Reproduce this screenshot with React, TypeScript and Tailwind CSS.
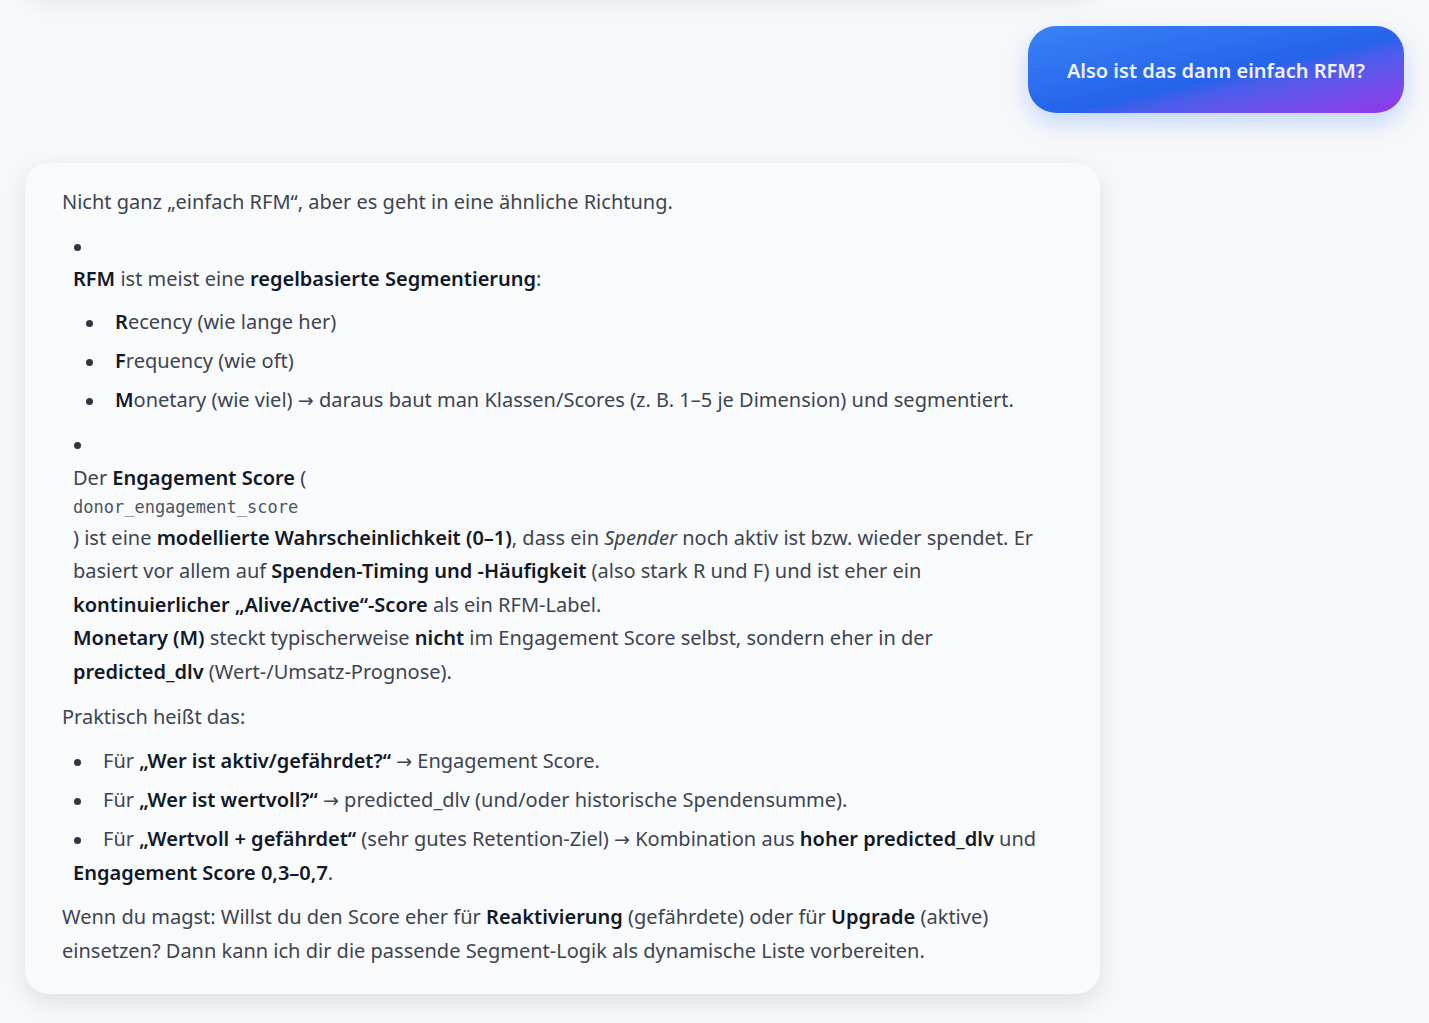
import React from "react";

const Dot = () => (
  <span className="inline-block w-[30px]">
    <span className="inline-block w-[7px] h-[7px] rounded-full bg-[#2f3542] ml-[1px] align-middle" />
  </span>
);

const B = ({ children }: { children: React.ReactNode }) => (
  <strong className="font-semibold text-[#111827]">{children}</strong>
);

const Arrow = () => (
  <span
    className="text-[19px] leading-none"
    style={{ fontFamily: '"DejaVu Sans", sans-serif' }}
  >
    →
  </span>
);

export default function App() {
  return (
    <div
      className="min-h-screen bg-[#f7f8fa] px-[25px] overflow-hidden text-[#3d4450]"
      style={{ fontFamily: '"Noto Sans", "Open Sans", sans-serif' }}
    >
      {/* previous message, scrolled off the top */}
      <div className="w-[1068px] h-[40px] -mt-[48px] rounded-3xl bg-[#f9fafb] shadow-[0_8px_24px_rgba(0,0,0,0.09)]" />

      {/* user bubble */}
      <div className="flex justify-end mt-[34px]">
        <div className="w-[376px] h-[87px] rounded-[28px] flex items-center justify-center pt-[3px] bg-linear-to-br from-[#3b82f6] via-[#2563eb] via-55% to-[#9333ea] shadow-[0_10px_24px_rgba(59,130,246,0.28)]">
          <span className="text-[20px] font-semibold text-[#eef2ff]">
            Also ist das dann einfach RFM?
          </span>
        </div>
      </div>

      {/* assistant answer */}
      <div className="mt-[50px] w-[1075px] rounded-3xl bg-[#f9fafb] shadow-[0_8px_24px_rgba(0,0,0,0.1)] pl-[37px] pr-[20px] pt-[22px] pb-[27px] text-[20px] leading-[33.5px] whitespace-nowrap">
        <p>Nicht ganz „einfach RFM“, aber es geht in eine ähnliche Richtung.</p>

        <ul className="mt-[10px] pl-[11px]">
          <li>
            <Dot />
            <p>
              <B>RFM</B> ist meist eine <B>regelbasierte Segmentierung</B>:
            </p>
            <ul className="mt-[9px] pl-[12px] flex flex-col gap-[5.5px]">
              <li>
                <Dot />
                <B>R</B>ecency (wie lange her)
              </li>
              <li>
                <Dot />
                <B>F</B>requency (wie oft)
              </li>
              <li>
                <Dot />
                <B>M</B>onetary (wie viel) <Arrow /> daraus baut man Klassen/Scores (z. B. 1–5 je Dimension) und segmentiert.
              </li>
            </ul>
          </li>
          <li className="mt-[11px]">
            <Dot />
            <p>
              Der <B>Engagement Score</B> (
            </p>
            <code
              className="block text-[17px] leading-[26.5px] text-[#4b5563]"
              style={{ fontFamily: '"DejaVu Sans Mono", "Liberation Mono", monospace' }}
            >
              donor_engagement_score
            </code>
            <p>
              ) ist eine <B>modellierte Wahrscheinlichkeit (0–1)</B>, dass ein <em>Spender</em> noch aktiv ist bzw. wieder spendet. Er
              <br />
              basiert vor allem auf <B>Spenden-Timing und -Häufigkeit</B> (also stark R und F) und ist eher ein
              <br />
              <B>kontinuierlicher „Alive/Active“-Score</B> als ein RFM-Label.
              <br />
              <B>Monetary (M)</B> steckt typischerweise <B>nicht</B> im Engagement Score selbst, sondern eher in der
              <br />
              <B>predicted_dlv</B> (Wert-/Umsatz-Prognose).
            </p>
          </li>
        </ul>

        <p className="mt-[12px]">Praktisch heißt das:</p>

        <ul className="mt-[10.5px] pl-[11px] flex flex-col gap-[5.5px]">
          <li>
            <Dot />
            Für <B>„Wer ist aktiv/gefährdet?“</B> <Arrow /> Engagement Score.
          </li>
          <li>
            <Dot />
            Für <B>„Wer ist wertvoll?“</B> <Arrow /> predicted_dlv (und/oder historische Spendensumme).
          </li>
          <li>
            <Dot />
            Für <B>„Wertvoll + gefährdet“</B> (sehr gutes Retention-Ziel) <Arrow /> Kombination aus <B>hoher predicted_dlv</B> und
            <br />
            <B>Engagement Score 0,3–0,7</B>.
          </li>
        </ul>

        <p className="mt-[11px]">
          Wenn du magst: Willst du den Score eher für <B>Reaktivierung</B> (gefährdete) oder für <B>Upgrade</B> (aktive)
          <br />
          einsetzen? Dann kann ich dir die passende Segment-Logik als dynamische Liste vorbereiten.
        </p>
      </div>
    </div>
  );
}
